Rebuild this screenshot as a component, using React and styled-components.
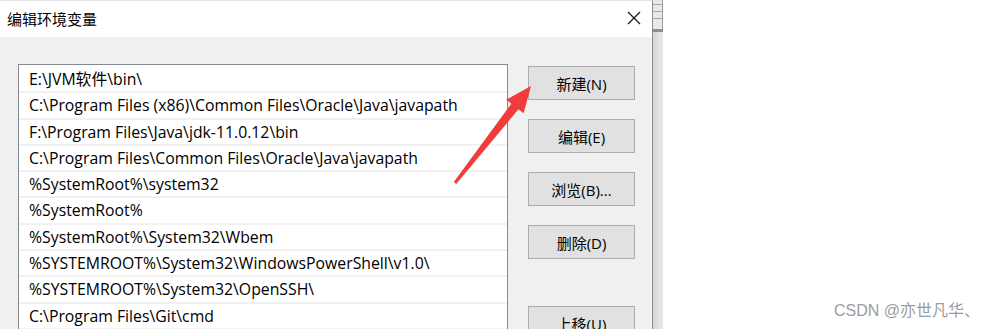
import React from 'react'
import styled, { createGlobalStyle } from 'styled-components'

const GlobalStyle = createGlobalStyle`
  html, body {
    margin: 0;
    padding: 0;
    background: #ffffff;
    overflow: hidden;
  }
  * { box-sizing: border-box; }
`

const paths = [
  'E:\\JVM软件\\bin\\',
  'C:\\Program Files (x86)\\Common Files\\Oracle\\Java\\javapath',
  'F:\\Program Files\\Java\\jdk-11.0.12\\bin',
  'C:\\Program Files\\Common Files\\Oracle\\Java\\javapath',
  '%SystemRoot%\\system32',
  '%SystemRoot%',
  '%SystemRoot%\\System32\\Wbem',
  '%SYSTEMROOT%\\System32\\WindowsPowerShell\\v1.0\\',
  '%SYSTEMROOT%\\System32\\OpenSSH\\',
  'C:\\Program Files\\Git\\cmd',
]

const buttons = [
  { label: '新建(N)', gap: 0 },
  { label: '编辑(E)', gap: 19 },
  { label: '浏览(B)...', gap: 19 },
  { label: '删除(D)', gap: 19 },
  { label: '上移(U)', gap: 47 },
]

export default function App() {
  return (
    <>
      <GlobalStyle />
      <Page>
        <Dialog>
          <TitleBar>
            <Title>编辑环境变量</Title>
            <CloseButton>
              <svg width="14" height="14" viewBox="0 0 14 14">
                <path d="M1 1 L13 13 M13 1 L1 13" stroke="#1b1b1b" strokeWidth="1.3" fill="none" />
              </svg>
            </CloseButton>
          </TitleBar>
          <Body>
            <PathList>
              {paths.map((p, i) => (
                <PathRow key={i}>{p}</PathRow>
              ))}
            </PathList>
            <ButtonColumn>
              {buttons.map(b => (
                <ActionButton key={b.label} $gap={b.gap}>{b.label}</ActionButton>
              ))}
            </ButtonColumn>
          </Body>
        </Dialog>
        <BackWindow>
          <BackGrip>
            <span />
            <span />
            <span />
          </BackGrip>
          <BackBar />
        </BackWindow>
        <Arrow width="995" height="329" viewBox="0 0 995 329">
          <polygon
            fill="#f23b3b"
            points="453.8,182.1 511.4,103.7 506.2,99.7 531,86 523.6,113.3 518.5,109.3 456.2,183.9"
          />
        </Arrow>
        <Watermark>CSDN @亦世凡华、</Watermark>
      </Page>
    </>
  )
}

const Page = styled.div`
  position: relative;
  width: 995px;
  height: 329px;
  display: flex;
  overflow: hidden;
  font-family: "Open Sans", "Noto Sans CJK SC", sans-serif;
`

const Dialog = styled.div`
  width: 653px;
  height: 100%;
  display: flex;
  flex-direction: column;
  border-right: 1px solid #8d8d8d;
  border-top: 1px solid #e3e3e3;
`

const TitleBar = styled.div`
  flex-shrink: 0;
  height: 36px;
  background: #ffffff;
  display: flex;
  align-items: center;
  justify-content: space-between;
  padding: 0 11px 2px 7px;
`

const Title = styled.div`
  font-family: "Noto Sans CJK SC", sans-serif;
  font-size: 15px;
  color: #000000;
`

const CloseButton = styled.div`
  width: 14px;
  height: 14px;
  display: flex;
`

const Body = styled.div`
  flex: 1;
  min-height: 0;
  overflow: hidden;
  background: #f0f0f0;
  display: flex;
  align-items: flex-start;
  gap: 20px;
  padding: 27px 17px 0 18px;
`

const PathList = styled.div`
  flex-shrink: 0;
  width: 490px;
  padding-top: 2px;
  background: #ffffff;
  border: 1px solid #848891;
  border-bottom: none;
  display: flex;
  flex-direction: column;
`

const PathRow = styled.div`
  flex-shrink: 0;
  height: 26.3px;
  line-height: 24px;
  padding: 0 0 0 10px;
  border-bottom: 2px solid #f1f1f1;
  font-size: 15.8px;
  color: #000000;
  white-space: nowrap;
`

const ButtonColumn = styled.div`
  flex-shrink: 0;
  display: flex;
  flex-direction: column;
  padding-top: 2px;
`

const ActionButton = styled.div`
  flex-shrink: 0;
  width: 107px;
  height: 34px;
  margin-top: ${p => p.$gap}px;
  background: #e1e1e1;
  border: 1px solid #adadad;
  display: flex;
  align-items: center;
  justify-content: center;
  padding-top: 1px;
  font-size: 15px;
  color: #000000;
`

const BackWindow = styled.div`
  width: 10px;
  height: 100%;
  display: flex;
  flex-direction: column;
  background: linear-gradient(to right, #d4d4d4, #e2e2e2 60%, #e6e6e6);
`

const BackGrip = styled.div`
  height: 29px;
  padding-top: 4px;
  display: flex;
  flex-direction: column;
  gap: 6px;
  border-right: 1px solid #9a9a9a;
  background: #e9e9e9;

  span {
    display: block;
    height: 1px;
    background: #a8a8a8;
  }
`

const BackBar = styled.div`
  height: 3px;
  background: #8f8f8f;
`

const Arrow = styled.svg`
  position: absolute;
  left: 0;
  top: 0;
  pointer-events: none;
`

const Watermark = styled.div`
  position: absolute;
  right: 15px;
  bottom: 8px;
  font-family: "Liberation Sans", "Noto Sans CJK SC", sans-serif;
  font-size: 16px;
  color: #9c9c9c;
`
